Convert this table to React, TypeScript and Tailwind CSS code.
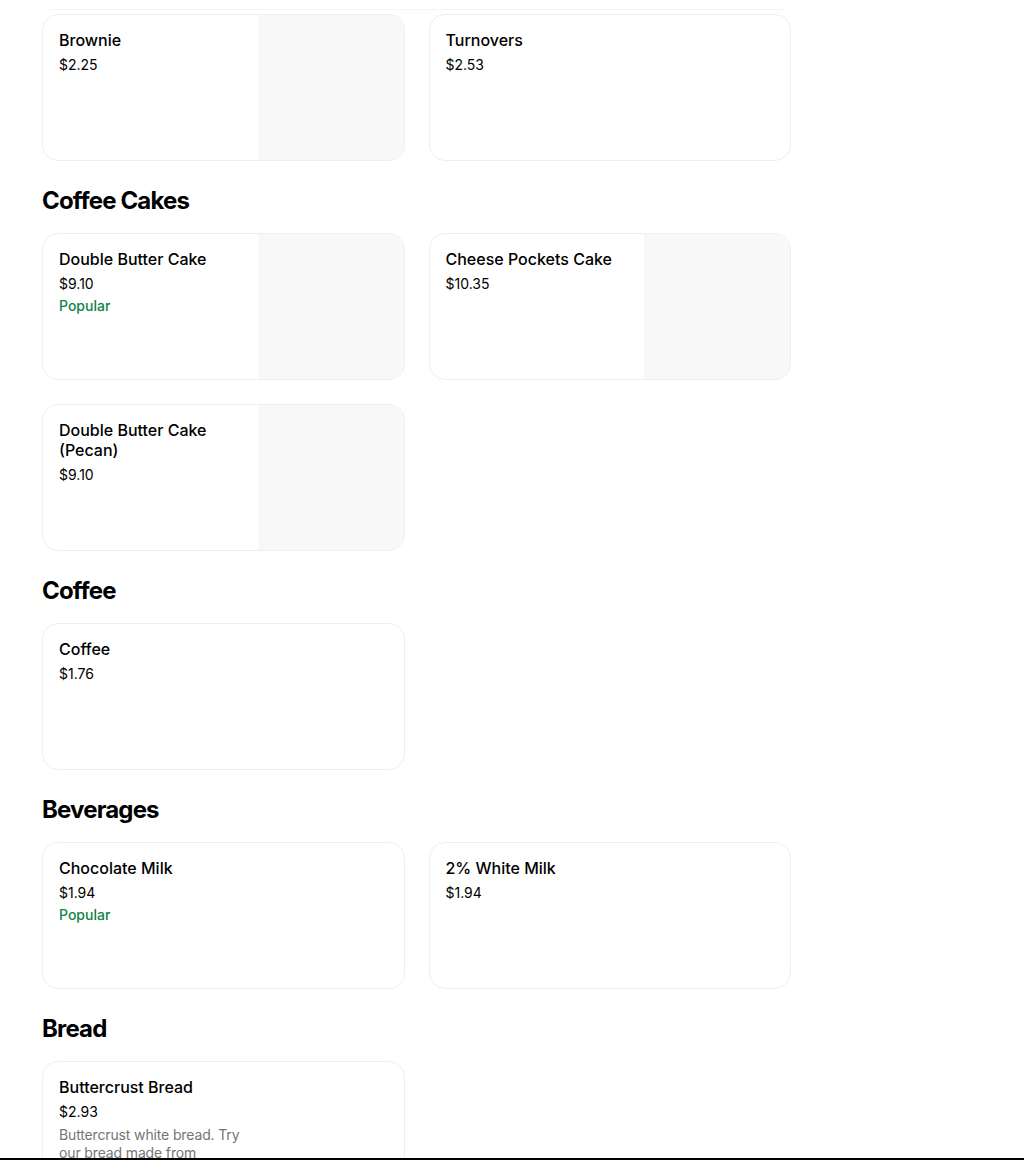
import React from "react";

/* ---------- DATA ---------- */

type Item = {
  name: string;
  price: string;
  popular?: boolean;
  description?: string;
  image?: boolean;
};

type Section = { title?: string; items: Item[] };

const sections: Section[] = [
  {
    items: [
      { name: "Brownie", price: "$2.25", image: true },
      { name: "Turnovers", price: "$2.53" },
    ],
  },
  {
    title: "Coffee Cakes",
    items: [
      { name: "Double Butter Cake", price: "$9.10", popular: true, image: true },
      { name: "Cheese Pockets Cake", price: "$10.35", image: true },
      { name: "Double Butter Cake (Pecan)", price: "$9.10", image: true },
    ],
  },
  {
    title: "Coffee",
    items: [{ name: "Coffee", price: "$1.76" }],
  },
  {
    title: "Beverages",
    items: [
      { name: "Chocolate Milk", price: "$1.94", popular: true },
      { name: "2% White Milk", price: "$1.94" },
    ],
  },
  {
    title: "Bread",
    items: [
      {
        name: "Buttercrust Bread",
        price: "$2.93",
        description:
          "Buttercrust white bread. Try our bread made from scratch every morning with simple ingredients.",
      },
    ],
  },
];

/* ---------- COMPONENTS ---------- */

function MenuCard({ item }: { item: Item }) {
  return (
    <div className="flex h-[147px] overflow-hidden rounded-2xl border border-[#efefef] bg-white">
      <div className="flex-1 pl-4 pr-3 pt-[15px]">
        <div className="text-base font-medium leading-5 text-black">{item.name}</div>
        <div className="mt-[5px] text-sm leading-5 text-black">{item.price}</div>
        {item.popular && (
          <div className="mt-0.5 text-sm font-medium leading-5 text-[#0e8345]">Popular</div>
        )}
        {item.description && (
          <div className="mt-1 text-sm leading-[18px] tracking-[-0.01em] text-[#757575]">
            {item.description}
          </div>
        )}
      </div>
      <div className={`w-[146px] shrink-0 ${item.image ? "bg-[#f8f8f8]" : ""}`} />
    </div>
  );
}

export default function App() {
  return (
    <div
      className="relative flex h-[1160px] w-full flex-col overflow-hidden bg-white"
      style={{ fontFamily: "Inter, 'Liberation Sans', sans-serif" }}
    >
      <div className="flex-1 overflow-hidden">
        <div className="ml-[46px] mt-[9px] h-px w-[740px] bg-[#f5f5f5]" />
        <div className="ml-[42px] w-[749px] pt-1">
          {sections.map((s, i) => (
            <div key={i}>
              {s.title && (
                <h2 className="mb-4 mt-6 h-8 text-2xl font-bold leading-8 tracking-[-0.035em] text-black">
                  {s.title}
                </h2>
              )}
              <div className="grid grid-cols-2 gap-6">
                {s.items.map((it) => (
                  <MenuCard key={it.name} item={it} />
                ))}
              </div>
            </div>
          ))}
        </div>
      </div>
      <div className="h-[2px] w-full shrink-0 bg-black" />
    </div>
  );
}
